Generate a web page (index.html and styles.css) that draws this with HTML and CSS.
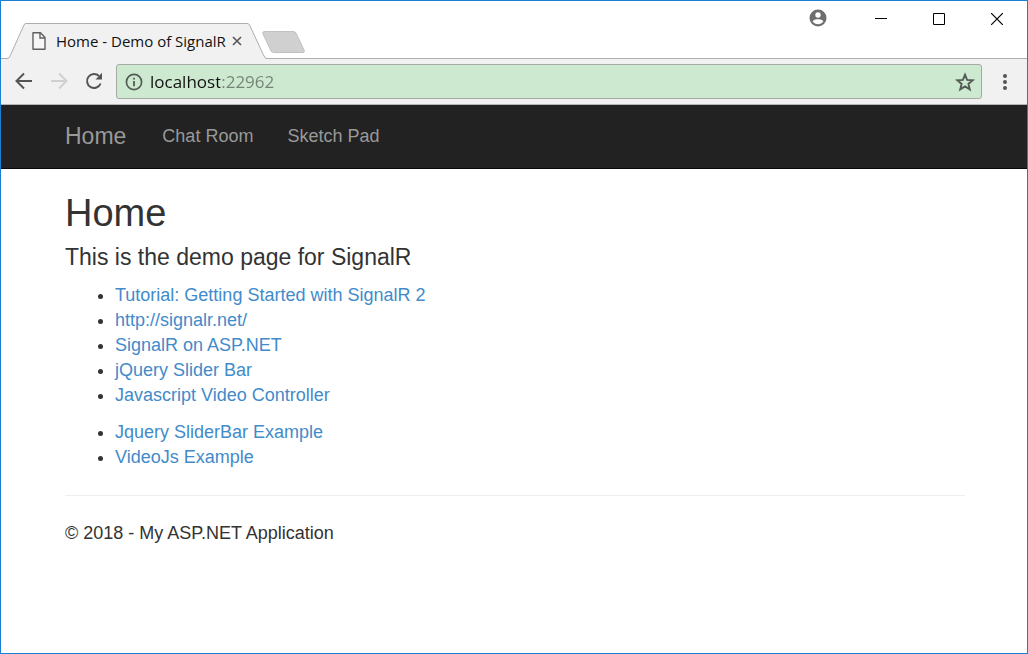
FILE: index.html
```
<!DOCTYPE html>
<html lang="en">
<head>
<meta charset="utf-8">
<title>Home - Demo of SignalR</title>
<link rel="stylesheet" href="styles.css">
</head>
<body>
<div class="window">
  <div class="tab-strip">
    <div class="tab">
      <svg class="tab-shape" viewBox="0 0 260 37" width="260" height="37" aria-hidden="true">
        <path d="M0 37V36C2 35 3 34 3 33L17 2Q17.500 .5 19 .5H240Q242 .5 242.500 2L257 33Q258 35.500 260 35.500V37Z" fill="#f1f1f1"/>
        <path d="M0 35.500Q2 35.500 3 33L17 2Q17.500 .5 19 .5H240Q242 .5 242.500 2L257 33Q258 35.500 260 35.500" fill="none" stroke="#aeaeae"/>
      </svg>
      <svg class="tab-icon" viewBox="0 0 14 18" width="14" height="18" aria-hidden="true">
        <path d="M1 .7H8.500L13 5.500V17.300H1Z" fill="#f7f7f7" stroke="#5f6062" stroke-width="1.400" stroke-linejoin="round"/>
        <path d="M8 1V6H13" fill="none" stroke="#5f6062" stroke-width="1.400"/>
      </svg>
      <span class="tab-title">Home - Demo of SignalR</span>
      <button class="tab-close" type="button" aria-label="Close tab">
        <svg viewBox="0 0 10 10" width="10" height="10"><path d="M1 1L9 9M9 1L1 9" stroke="#5a5a5a" stroke-width="1.700"/></svg>
      </button>
    </div>
    <button class="new-tab" type="button" aria-label="New tab">
      <svg viewBox="0 0 44 22" width="44" height="22"><path d="M2.500 .5H31Q33 .5 34 2L42 19Q43 21.500 41 21.500H12Q10 21.500 9 20L1 3Q0 .5 2.500 .5Z" fill="#d0d0d0" stroke="#c1c1c1"/></svg>
    </button>
    <div class="window-controls">
      <button class="profile" type="button" aria-label="Profile">
        <svg viewBox="0 0 18 18" width="18" height="18"><circle cx="9" cy="9" r="8.500" fill="#6e6e6e"/><circle cx="9" cy="6" r="2.700" fill="#fff"/><path d="M3.600 12.300C4 10.800 7 10.200 9 10.200S14 10.800 14.400 12.300A6.500 6.500 0 0 1 3.600 12.300Z" fill="#fff"/></svg>
      </button>
      <button class="control" type="button" aria-label="Minimize">
        <svg viewBox="0 0 12 12" width="12" height="12"><path d="M0 5.500H12" stroke="#000"/></svg>
      </button>
      <button class="control" type="button" aria-label="Maximize">
        <svg viewBox="0 0 12 12" width="12" height="12"><path d="M.5 .5H11.500V11.500H.5Z" fill="none" stroke="#000"/></svg>
      </button>
      <button class="control" type="button" aria-label="Close">
        <svg viewBox="0 0 12 12" width="12" height="12"><path d="M0 0L12 12M12 0L0 12" stroke="#000" stroke-width="1.200"/></svg>
      </button>
    </div>
  </div>

  <div class="toolbar">
    <div class="nav-buttons">
      <button class="tool" type="button" aria-label="Back">
        <svg viewBox="0 0 18 18" width="18" height="18"><path d="M17 9H2M9 1.500L1.500 9L9 16.500" fill="none" stroke="#555" stroke-width="2"/></svg>
      </button>
      <button class="tool" type="button" aria-label="Forward" disabled>
        <svg viewBox="0 0 18 18" width="18" height="18"><path d="M1 9H16M9 1.500L16.500 9L9 16.500" fill="none" stroke="#d0d0d0" stroke-width="2"/></svg>
      </button>
      <button class="tool" type="button" aria-label="Reload">
        <svg viewBox="0 0 18 18" width="18" height="18"><path d="M15.600 11.500A7 7 0 1 1 14 4" fill="none" stroke="#555" stroke-width="2"/><path d="M17 .8V7.500H10.500Z" fill="#555"/></svg>
      </button>
    </div>
    <div class="omnibox">
      <svg viewBox="0 0 18 18" width="18" height="18" aria-hidden="true"><circle cx="9" cy="9" r="7.600" fill="none" stroke="#555b56" stroke-width="1.700"/><path d="M9 8V13.300M9 4.700V6.500" stroke="#555b56" stroke-width="1.800"/></svg>
      <input class="address" type="text" value="localhost:22962" aria-label="Address" spellcheck="false">
      <button class="star" type="button" aria-label="Bookmark this page">
        <svg viewBox="0 0 20 20" width="20" height="20"><path d="M10 2.700L12.100 7.900L17.700 8.300L13.400 11.900L14.800 17.400L10 14.400L5.200 17.400L6.600 11.900L2.300 8.300L7.900 7.900Z" fill="none" stroke="#555b56" stroke-width="1.900"/></svg>
      </button>
    </div>
    <button class="menu" type="button" aria-label="Menu">
      <svg viewBox="0 0 4 18" width="4" height="18"><g fill="#555"><circle cx="2" cy="3" r="2"/><circle cx="2" cy="9" r="2"/><circle cx="2" cy="15" r="2"/></g></svg>
    </button>
  </div>

  <nav class="navbar">
    <a class="brand" href="#">Home</a>
    <a class="nav-link" href="#">Chat Room</a>
    <a class="nav-link" href="#">Sketch Pad</a>
  </nav>

  <main class="content">
    <h2 class="title">Home</h2>
    <h4 class="subtitle">This is the demo page for SignalR</h4>
    <ul class="links">
      <li><a href="#">Tutorial: Getting Started with SignalR 2</a></li>
      <li><a href="#">http://signalr.net/</a></li>
      <li><a href="#">SignalR on ASP.NET</a></li>
      <li><a href="#">jQuery Slider Bar</a></li>
      <li><a href="#">Javascript Video Controller</a></li>
    </ul>
    <ul class="links">
      <li><a href="#">Jquery SliderBar Example</a></li>
      <li><a href="#">VideoJs Example</a></li>
    </ul>
    <hr class="rule">
    <footer class="footer">© 2018 - My ASP.NET Application</footer>
  </main>
</div>
</body>
</html>
```
FILE: styles.css
```
* {
  box-sizing: border-box;
}

body {
  margin: 0;
  background: #fff;
  color: #333;
  font-family: "Liberation Sans", Arial, sans-serif;
  font-size: 18px;
  line-height: 25px;
}

button {
  display: flex;
  align-items: center;
  justify-content: center;
  flex: none;
  padding: 0;
  border: 0;
  background: transparent;
}

svg {
  display: block;
  flex: none;
}

.window {
  min-height: 100vh;
  border: 1px solid #1a7fd4;
}

.tab-strip {
  display: flex;
  align-items: flex-end;
  height: 58px;
  padding-left: 6px;
  border-bottom: 1px solid #aeaeae;
}

.tab {
  position: relative;
  display: flex;
  align-items: center;
  width: 260px;
  height: 37px;
  margin-bottom: -2px;
  padding: 0 0 2px 25px;
}

.tab-shape {
  position: absolute;
  top: 0;
  left: 0;
}

.tab-icon {
  position: relative;
}

.tab-title {
  position: relative;
  width: 174px;
  margin-left: 10px;
  color: #111;
  font-family: "Segoe UI", "Open Sans", sans-serif;
  font-size: 15px;
  line-height: 20px;
  white-space: nowrap;
}

.tab-close {
  position: relative;
  width: 14px;
  height: 14px;
}

.new-tab {
  width: 44px;
  height: 22px;
  margin: 0 0 5px -5px;
}

.window-controls {
  display: flex;
  align-self: flex-start;
  margin-left: auto;
  padding-right: 1px;
}

.profile {
  width: 36px;
  height: 34px;
  margin-right: 16px;
}

.control {
  width: 58px;
  height: 36px;
}

.toolbar {
  display: flex;
  align-items: center;
  height: 46px;
  padding-left: 5px;
  border-bottom: 1px solid #b5b5b5;
  background: #f1f1f1;
}

.nav-buttons {
  display: flex;
  padding-bottom: 2px;
}

.tool {
  width: 35px;
  height: 34px;
}

.omnibox {
  display: flex;
  flex: 1;
  align-items: center;
  height: 35px;
  margin-left: 5px;
  padding: 0 6px 0 8px;
  border: 1px solid #a6a9a6;
  border-radius: 3px;
  background: #cde9d0;
}

.address {
  flex: 1;
  min-width: 0;
  height: 30px;
  margin-left: 7px;
  padding: 0;
  border: 0;
  outline: 0;
  background: linear-gradient(to right, #111 70px, #748276 70px);
  background-clip: text;
  -webkit-background-clip: text;
  color: #111;
  -webkit-text-fill-color: transparent;
  font-family: "Segoe UI", "Open Sans", sans-serif;
  font-size: 17px;
}

.star {
  width: 20px;
  height: 20px;
}

.menu {
  width: 45px;
  height: 34px;
}

.navbar {
  display: flex;
  align-items: center;
  height: 64px;
  padding: 0 64px;
  border-bottom: 1px solid #080808;
  background: #222;
}

.brand,
.nav-link {
  color: #999;
  text-decoration: none;
}

.brand {
  margin-right: 19px;
  font-size: 23px;
}

.nav-link {
  padding: 0 17px;
}

.content {
  padding: 24px 62px 24px 64px;
}

.title {
  margin: 0 0 12px;
  font-size: 38px;
  font-weight: 400;
  line-height: 40px;
}

.subtitle {
  margin: 0 0 13px;
  font-size: 23px;
  font-weight: 400;
  line-height: 25px;
}

.links {
  margin: 0 0 12px;
  padding-left: 50px;
}

.links a {
  color: #428bca;
  text-decoration: none;
}

.rule {
  margin: 25px 0;
  border: 0;
  border-top: 1px solid #eee;
}
```
